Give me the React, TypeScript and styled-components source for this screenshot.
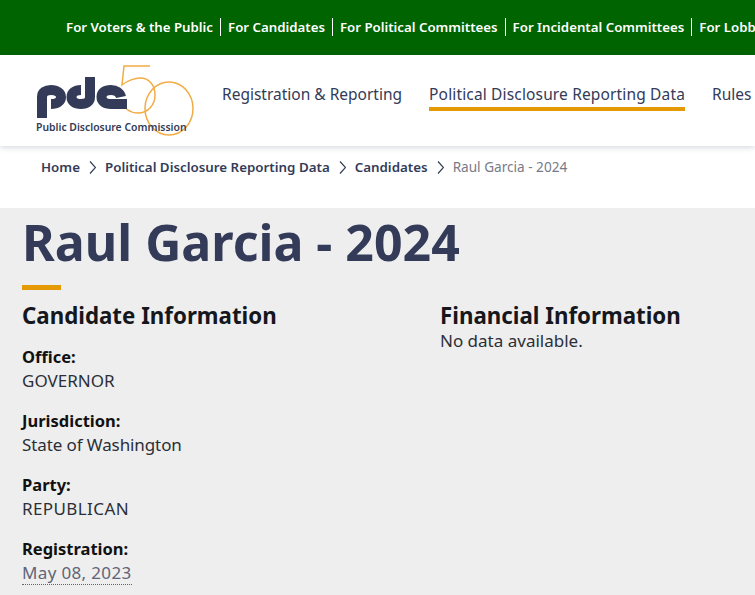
import React from 'react'
import styled, { createGlobalStyle } from 'styled-components'

const GlobalStyle = createGlobalStyle`
  html, body {
    margin: 0;
    padding: 0;
    height: 100%;
    overflow: hidden;
    background: #eee;
    font-family: "Noto Sans", "Open Sans", sans-serif;
  }
`

const Page = styled.div`
  width: 755px;
  height: 595px;
  overflow: hidden;
  background: #eeeeee;
`

const TopBar = styled.div`
  height: 55px;
  box-sizing: border-box;
  padding: 0 0 2px 66px;
  background: #006400;
  display: flex;
  align-items: center;
  white-space: nowrap;
  overflow: hidden;
`

const TopLink = styled.a`
  color: #fff;
  font-size: 13.25px;
  font-weight: 600;
  line-height: 18px;
  padding-right: 7px;
  margin-right: 7px;
  border-right: 1px solid #fff;

  &:last-child {
    border-right: 0;
  }
`

const MainNav = styled.header`
  height: 91px;
  background: #fff;
  display: flex;
  box-shadow: 0 1px 6px rgba(40, 50, 80, 0.22);
  position: relative;
  white-space: nowrap;
  overflow: hidden;
`

const LogoBox = styled.div`
  width: 222px;
  flex: none;
  padding: 9px 0 0 36px;
  box-sizing: border-box;
  position: relative;
`

const LogoCaption = styled.div`
  position: absolute;
  left: 36px;
  top: 65px;
  font-size: 10.4px;
  line-height: 14px;
  font-weight: 600;
  color: #333b58;
`

const NavLinks = styled.nav`
  display: flex;
  gap: 27px;
  padding-top: 28px;
`

const NavLink = styled.a<{ $active?: boolean }>`
  color: #333b58;
  font-size: 15.5px;
  line-height: 22px;
  height: 28px;
  box-sizing: border-box;
  letter-spacing: ${({ $active }) => ($active ? '0.15px' : '0')};
  border-bottom: 4px solid ${({ $active }) => ($active ? '#e59a05' : 'transparent')};
`

const Crumbs = styled.div`
  height: 62px;
  background: #fff;
  display: flex;
  align-items: flex-start;
  padding: 12px 0 0 41px;
  box-sizing: border-box;
  font-size: 13.35px;
  line-height: 18px;
`

const Crumb = styled.a`
  color: #333b58;
  font-weight: 600;
`

const CrumbCurrent = styled.span`
  color: #777b88;
  font-size: 13.6px;
`

const Chevron = styled.svg`
  width: 7px;
  height: 13px;
  margin: 3px 9px 0;
  flex: none;
`

const Content = styled.main`
  padding: 0 22px;
`

const Title = styled.h1`
  margin: 0;
  padding-top: 4px;
  font-size: 50px;
  line-height: 60px;
  font-weight: 700;
  color: #333b58;
`

const Rule = styled.div`
  width: 39px;
  height: 5px;
  background: #e59a05;
  margin-top: 13px;
`

const Columns = styled.div`
  display: grid;
  grid-template-columns: 418px 1fr;
  margin-top: 12px;
`

const SectionTitle = styled.h2`
  margin: 0 0 -1px;
  font-size: 22.3px;
  line-height: 28px;
  font-weight: 700;
  color: #15171c;
`

const Field = styled.div`
  margin-top: 16px;
  font-size: 17px;
  line-height: 24px;
`

const FieldLabel = styled.div`
  font-weight: 700;
  font-size: 16.5px;
  color: #111;
`

const FieldValue = styled.div<{ $tracking?: number }>`
  color: #2b2e38;
  letter-spacing: ${({ $tracking }) => $tracking ?? 0}px;
`

const DateValue = styled.span`
  color: #5f6478;
  letter-spacing: 0.35px;
  border-bottom: 1px dotted #5f6478;
`

const NoData = styled.div`
  font-size: 17px;
  line-height: 24px;
  color: #2b2e38;
`

const Logo = () => (
  <svg width="160" height="74" viewBox="0 0 160 74" fill="none">
    <g stroke="#f2ac45" strokeWidth="1.5">
      <path d="M114 2 H88 L86 21 C92 16 100 14 104 14 C113 14 119 21 119 31 C119 41 112 49 102 49 C94 49 88 45 84 36" />
      <ellipse cx="133" cy="44.5" rx="24" ry="26.5" />
    </g>
    <g stroke="#333b58" strokeWidth="10">
      <path d="M6 54 V33 C6 28 10 26 15 26 C21 26 25 29 25 33 C25 37.5 21 40 15 40" />
      <path d="M54 13 V33 C54 37.5 51 40 45 40 C39 40 35.5 37.5 35.5 33 C35.5 29 39 26 45 26" />
      <path d="M91 40 H75 C69 40 65.5 37.5 65.5 33 C65.5 28.5 69 26 75 26 C80 26 84 28.5 85 33" />
    </g>
  </svg>
)

const Sep = () => (
  <Chevron viewBox="0 0 7 13" fill="none" stroke="#333b58" strokeWidth="1.2">
    <path d="M1 0.5 L6.5 6.5 L1 12.5" />
  </Chevron>
)

const topLinks = [
  'For Voters & the Public',
  'For Candidates',
  'For Political Committees',
  'For Incidental Committees',
  'For Lobbyists',
]

const fields = [
  { label: 'Office:', value: 'GOVERNOR', tracking: 0 },
  { label: 'Jurisdiction:', value: 'State of Washington', tracking: -0.1 },
  { label: 'Party:', value: 'REPUBLICAN', tracking: 0.4 },
]

export default function App() {
  return (
    <Page>
      <GlobalStyle />
      <TopBar>
        {topLinks.map(link => (
          <TopLink key={link}>{link}</TopLink>
        ))}
      </TopBar>
      <MainNav>
        <LogoBox>
          <Logo />
          <LogoCaption>Public Disclosure Commission</LogoCaption>
        </LogoBox>
        <NavLinks>
          <NavLink>Registration &amp; Reporting</NavLink>
          <NavLink $active>Political Disclosure Reporting Data</NavLink>
          <NavLink>Rules</NavLink>
        </NavLinks>
      </MainNav>
      <Crumbs>
        <Crumb>Home</Crumb>
        <Sep />
        <Crumb>Political Disclosure Reporting Data</Crumb>
        <Sep />
        <Crumb>Candidates</Crumb>
        <Sep />
        <CrumbCurrent>Raul Garcia - 2024</CrumbCurrent>
      </Crumbs>
      <Content>
        <Title>Raul Garcia - 2024</Title>
        <Rule />
        <Columns>
          <div>
            <SectionTitle>Candidate Information</SectionTitle>
            {fields.map(field => (
              <Field key={field.label}>
                <FieldLabel>{field.label}</FieldLabel>
                <FieldValue $tracking={field.tracking}>{field.value}</FieldValue>
              </Field>
            ))}
            <Field>
              <FieldLabel>Registration:</FieldLabel>
              <DateValue>May 08, 2023</DateValue>
            </Field>
          </div>
          <div>
            <SectionTitle>Financial Information</SectionTitle>
            <NoData>No data available.</NoData>
          </div>
        </Columns>
      </Content>
    </Page>
  )
}
